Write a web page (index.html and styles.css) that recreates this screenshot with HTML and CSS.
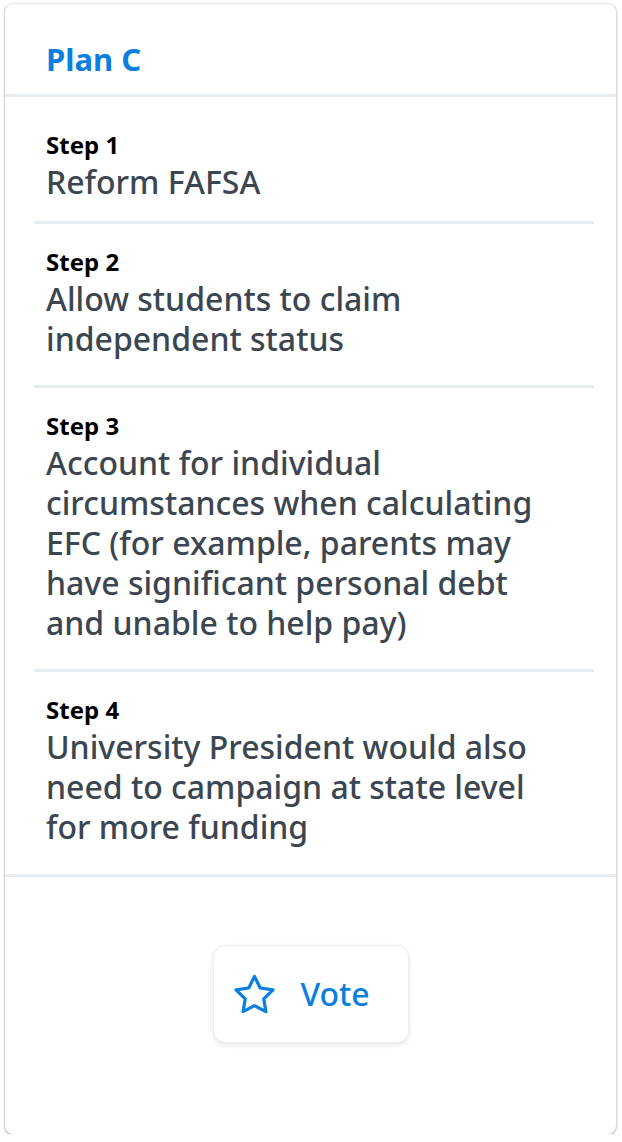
FILE: index.html
```html
<!DOCTYPE html>
<html lang="en">
<head>
<meta charset="utf-8">
<title>Plan C</title>
<link rel="stylesheet" href="styles.css">
</head>
<body>
<div class="card">
  <div class="card-header">
    <h2 class="plan-title">Plan C</h2>
  </div>
  <div class="steps">
    <div class="step step-first">
      <div class="step-label">Step 1</div>
      <div class="step-text">Reform FAFSA</div>
    </div>
    <div class="step">
      <div class="step-label">Step 2</div>
      <div class="step-text">Allow students to claim independent status</div>
    </div>
    <div class="step">
      <div class="step-label">Step 3</div>
      <div class="step-text">Account for individual circumstances when calculating EFC (for example, parents may have significant personal debt and unable to help pay)</div>
    </div>
    <div class="step">
      <div class="step-label">Step 4</div>
      <div class="step-text">University President would also need to campaign at state level for more funding</div>
    </div>
  </div>
  <div class="card-footer">
    <button class="vote-btn" type="button">
      <svg class="star" viewBox="0.92 0.71 22.16 21.6" width="41" height="40" aria-hidden="true">
        <polygon points="12 2 15.09 8.26 22 9.27 17 14.14 18.18 21.02 12 17.77 5.82 21.02 7 14.14 2 9.27 8.91 8.26" fill="none" stroke="currentColor" stroke-width="1.75" stroke-linejoin="round" stroke-linecap="round"/>
      </svg>
      <span class="vote-label">Vote</span>
    </button>
  </div>
</div>
</body>
</html>
```

FILE: styles.css
```css
* { box-sizing: border-box; }

html, body {
  margin: 0;
  padding: 0;
  background: #ffffff;
}

body {
  padding: 4px 6px 0 5px;
  font-family: "Noto Sans", "Open Sans", "Liberation Sans", sans-serif;
}

.card {
  background: #ffffff;
  border-radius: 8px;
  box-shadow: 0 0 2px rgba(0, 0, 0, 0.16), 0 1px 3px rgba(0, 0, 0, 0.32);
  height: 1130px;
  display: flex;
  flex-direction: column;
}

.card-header {
  padding: 35px 41px 15px;
  border-bottom: 3px solid #e7ecf0;
}

.plan-title {
  margin: 0;
  font-size: 31px;
  line-height: 40px;
  font-weight: 700;
  color: #0b7fe0;
}

.steps {
  padding: 10px 22px 1px 29px;
}

.step {
  padding: 20px 46px 26px 12px;
  border-bottom: 3px solid #e7ecf0;
}

.step-first {
  padding-bottom: 19px;
}

.step:last-child {
  border-bottom: none;
}

.step-label {
  font-size: 24px;
  line-height: 35px;
  font-weight: 700;
  color: #000000;
}

.step-text {
  font-size: 32px;
  line-height: 40px;
  font-weight: 500;
  color: #3b4651;
}

.card-footer {
  flex: 1;
  border-top: 3px solid #e7ecf0;
  display: flex;
  justify-content: center;
  align-items: flex-start;
  padding-top: 68px;
}

.vote-btn {
  width: 196px;
  height: 98px;
  display: flex;
  align-items: center;
  gap: 26px;
  padding: 0 0 0 20px;
  background: #ffffff;
  border: 1px solid #e9eef2;
  border-radius: 12px;
  box-shadow: 0 2px 5px rgba(0, 0, 0, 0.1);
  color: #0b7fe0;
  font-family: inherit;
  cursor: pointer;
}

.star {
  display: block;
  flex: none;
}

.vote-label {
  font-size: 32px;
  line-height: 40px;
  font-weight: 500;
  color: #0b7fe0;
}
```
